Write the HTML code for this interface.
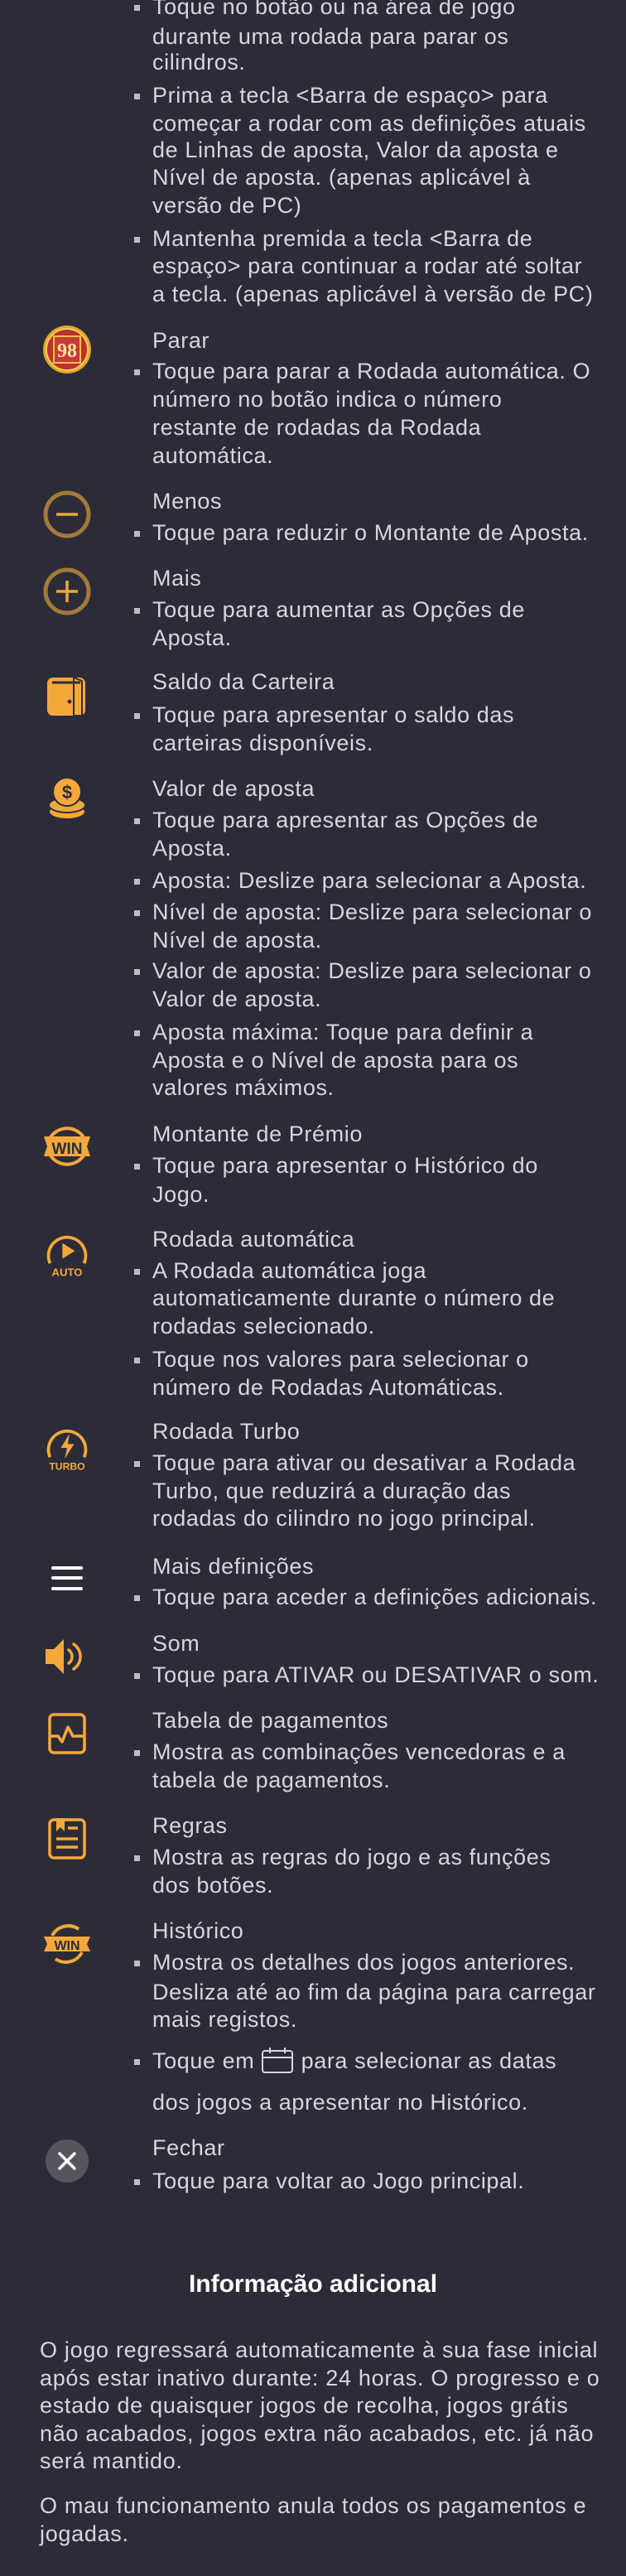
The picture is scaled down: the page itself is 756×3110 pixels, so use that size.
<!DOCTYPE html>
<html><head><meta charset="utf-8">
<style>
html,body{margin:0;padding:0;}
body{width:756px;height:3110px;background:#2c2c39;position:relative;overflow:hidden;font-family:"Liberation Sans","DejaVu Sans",sans-serif;color:#d6d6de;}
.l{position:absolute;left:184px;font-size:27px;letter-spacing:0.6px;line-height:34px;height:34px;white-space:nowrap;}
.b::before{content:"";position:absolute;left:-22px;top:15px;width:7px;height:7px;background:#bdbdc6;}
.ic{position:absolute;left:51px;width:60px;height:60px;}
.p{position:absolute;left:48px;font-size:27px;letter-spacing:0.7px;line-height:34px;white-space:nowrap;color:#d6d6de;}
</style></head><body>

<div class="l b" style="top:-9px">Toque no botão ou na área de jogo</div>
<div class="l" style="top:27px">durante uma rodada para parar os</div>
<div class="l" style="top:58px">cilindros.</div>
<div class="l b" style="top:98px">Prima a tecla &lt;Barra de espaço&gt; para</div>
<div class="l" style="top:132px">começar a rodar com as definições atuais</div>
<div class="l" style="top:164px">de Linhas de aposta, Valor da aposta e</div>
<div class="l" style="top:197px">Nível de aposta. (apenas aplicável à</div>
<div class="l" style="top:231px">versão de PC)</div>
<div class="l b" style="top:271px">Mantenha premida a tecla &lt;Barra de</div>
<div class="l" style="top:304px">espaço&gt; para continuar a rodar até soltar</div>
<div class="l" style="top:338px">a tecla. (apenas aplicável à versão de PC)</div>

<svg class="ic" style="top:392px" viewBox="0 0 60 60"><circle cx="30" cy="30" r="29" fill="#e0a92a"/><circle cx="30" cy="30" r="25" fill="#b8322e" stroke="#f6cf55" stroke-width="2"/><rect x="14" y="14" width="32" height="32" fill="#c9393a" stroke="#f2c14a" stroke-width="2"/><text x="30" y="39" text-anchor="middle" font-family="Liberation Serif,serif" font-weight="bold" font-size="24" fill="#fbe59a">98</text></svg>
<div class="l" style="top:394px">Parar</div>
<div class="l b" style="top:431px">Toque para parar a Rodada automática. O</div>
<div class="l" style="top:465px">número no botão indica o número</div>
<div class="l" style="top:499px">restante de rodadas da Rodada</div>
<div class="l" style="top:533px">automática.</div>

<svg class="ic" style="top:591px" viewBox="0 0 60 60"><circle cx="30" cy="30" r="26" fill="none" stroke="#a47a3a" stroke-width="5"/><line x1="17" y1="30" x2="43" y2="30" stroke="#f0a830" stroke-width="3.5"/></svg>
<div class="l" style="top:588px">Menos</div>
<div class="l b" style="top:626px">Toque para reduzir o Montante de Aposta.</div>

<svg class="ic" style="top:684px" viewBox="0 0 60 60"><circle cx="30" cy="30" r="26" fill="none" stroke="#a47a3a" stroke-width="5"/><line x1="17" y1="30" x2="43" y2="30" stroke="#f0a830" stroke-width="3.5"/><line x1="30" y1="17" x2="30" y2="43" stroke="#f0a830" stroke-width="3.5"/></svg>
<div class="l" style="top:681px">Mais</div>
<div class="l b" style="top:719px">Toque para aumentar as Opções de</div>
<div class="l" style="top:753px">Aposta.</div>

<svg class="ic" style="top:811px" viewBox="0 0 60 60"><rect x="6" y="7" width="46" height="46" rx="7" fill="#f5a83a"/><path d="M38 7 L48 11 L48 53 L38 53 Z" fill="#f5a83a" stroke="#2c2c39" stroke-width="2"/><path d="M12 13 H46" stroke="#2c2c39" stroke-width="3"/><circle cx="33" cy="36" r="2.5" fill="#2c2c39"/></svg>
<div class="l" style="top:806px">Saldo da Carteira</div>
<div class="l b" style="top:846px">Toque para apresentar o saldo das</div>
<div class="l" style="top:880px">carteiras disponíveis.</div>

<svg class="ic" style="top:936px" viewBox="0 0 60 60"><ellipse cx="30" cy="44" rx="22" ry="9" fill="#f5a83a" stroke="#2c2c39" stroke-width="2"/><ellipse cx="30" cy="36" rx="22" ry="9" fill="#f5a83a" stroke="#2c2c39" stroke-width="2"/><circle cx="30" cy="20" r="17" fill="#f5a83a" stroke="#2c2c39" stroke-width="2"/><text x="30" y="28" text-anchor="middle" font-weight="bold" font-size="22" fill="#2c2c39" font-family="Liberation Sans,sans-serif">$</text></svg>
<div class="l" style="top:935px">Valor de aposta</div>
<div class="l b" style="top:973px">Toque para apresentar as Opções de</div>
<div class="l" style="top:1007px">Aposta.</div>
<div class="l b" style="top:1046px">Aposta: Deslize para selecionar a Aposta.</div>
<div class="l b" style="top:1084px">Nível de aposta: Deslize para selecionar o</div>
<div class="l" style="top:1118px">Nível de aposta.</div>
<div class="l b" style="top:1155px">Valor de aposta: Deslize para selecionar o</div>
<div class="l" style="top:1189px">Valor de aposta.</div>
<div class="l b" style="top:1229px">Aposta máxima: Toque para definir a</div>
<div class="l" style="top:1263px">Aposta e o Nível de aposta para os</div>
<div class="l" style="top:1296px">valores máximos.</div>

<svg class="ic" style="top:1353px" viewBox="0 0 60 60"><path d="M10 20 A24 24 0 0 1 50 20" fill="none" stroke="#f5a83a" stroke-width="4"/><path d="M10 42 A24 24 0 0 0 50 42" fill="none" stroke="#f5a83a" stroke-width="4"/><path d="M2 19 H58 L54 31 L58 43 H2 L6 31 Z" fill="#f5a83a"/><text x="30" y="40" text-anchor="middle" font-weight="bold" font-size="19" fill="#2c2c39" font-family="Liberation Sans,sans-serif">WIN</text></svg>
<div class="l" style="top:1352px">Montante de Prémio</div>
<div class="l b" style="top:1390px">Toque para apresentar o Histórico do</div>
<div class="l" style="top:1425px">Jogo.</div>

<svg class="ic" style="top:1484px" viewBox="0 0 60 64"><path d="M8 44 A24 24 0 1 1 52 44" fill="none" stroke="#f5a83a" stroke-width="4"/><path d="M24 18 L40 28 L24 38 Z" fill="#f5a83a"/><text x="30" y="60" text-anchor="middle" font-weight="bold" font-size="14" fill="#f5a83a" font-family="Liberation Sans,sans-serif">AUTO</text></svg>
<div class="l" style="top:1479px">Rodada automática</div>
<div class="l b" style="top:1517px">A Rodada automática joga</div>
<div class="l" style="top:1550px">automaticamente durante o número de</div>
<div class="l" style="top:1584px">rodadas selecionado.</div>
<div class="l b" style="top:1624px">Toque nos valores para selecionar o</div>
<div class="l" style="top:1658px">número de Rodadas Automáticas.</div>

<svg class="ic" style="top:1718px" viewBox="0 0 60 64"><path d="M8 44 A24 24 0 1 1 52 44" fill="none" stroke="#f5a83a" stroke-width="4"/><path d="M33 14 L22 32 H30 L27 46 L39 27 H31 Z" fill="#f5a83a"/><text x="30" y="60" text-anchor="middle" font-weight="bold" font-size="13" fill="#f5a83a" font-family="Liberation Sans,sans-serif">TURBO</text></svg>
<div class="l" style="top:1711px">Rodada Turbo</div>
<div class="l b" style="top:1749px">Toque para ativar ou desativar a Rodada</div>
<div class="l" style="top:1783px">Turbo, que reduzirá a duração das</div>
<div class="l" style="top:1816px">rodadas do cilindro no jogo principal.</div>

<svg class="ic" style="top:1875px" viewBox="0 0 60 60"><g stroke="#fff" stroke-width="4" stroke-linecap="round"><line x1="13" y1="18" x2="47" y2="18"/><line x1="13" y1="30" x2="47" y2="30"/><line x1="13" y1="43" x2="47" y2="43"/></g></svg>
<div class="l" style="top:1874px">Mais definições</div>
<div class="l b" style="top:1911px">Toque para aceder a definições adicionais.</div>

<svg class="ic" style="top:1970px" viewBox="0 0 60 60"><path d="M4 21 H14 L26 9 V51 L14 39 H4 Z" fill="#f5a83a"/><path d="M32 22 A10 10 0 0 1 32 38" fill="none" stroke="#f5a83a" stroke-width="3.5" stroke-linecap="round"/><path d="M38 15 A18 18 0 0 1 38 45" fill="none" stroke="#f5a83a" stroke-width="3.5" stroke-linecap="round"/></svg>
<div class="l" style="top:1967px">Som</div>
<div class="l b" style="top:2005px">Toque para ATIVAR ou DESATIVAR o som.</div>

<svg class="ic" style="top:2063px" viewBox="0 0 60 60"><rect x="9" y="7" width="42" height="46" rx="5" fill="none" stroke="#f5a83a" stroke-width="3.5"/><path d="M9 33 H19 L24 40 L31 22 L37 33 H51" fill="none" stroke="#f5a83a" stroke-width="3.5" stroke-linejoin="round"/></svg>
<div class="l" style="top:2060px">Tabela de pagamentos</div>
<div class="l b" style="top:2098px">Mostra as combinações vencedoras e a</div>
<div class="l" style="top:2132px">tabela de pagamentos.</div>

<svg class="ic" style="top:2190px" viewBox="0 0 60 60"><rect x="9" y="7" width="42" height="46" rx="5" fill="none" stroke="#f5a83a" stroke-width="3.5"/><path d="M17 5 H27 V21 L22 16 L17 21 Z" fill="#f5a83a"/><g stroke="#f5a83a" stroke-width="3.5"><line x1="31" y1="17" x2="43" y2="17"/><line x1="17" y1="30" x2="43" y2="30"/><line x1="17" y1="40" x2="43" y2="40"/></g></svg>
<div class="l" style="top:2187px">Regras</div>
<div class="l b" style="top:2225px">Mostra as regras do jogo e as funções</div>
<div class="l" style="top:2259px">dos botões.</div>

<svg class="ic" style="top:2317px" viewBox="0 0 60 60"><path d="M12 20 A22 22 0 0 1 44 12" fill="none" stroke="#f5a83a" stroke-width="4"/><path d="M48 40 A22 22 0 0 1 16 48" fill="none" stroke="#f5a83a" stroke-width="4"/><path d="M2 21 H58 L54 30 L58 39 H2 L6 30 Z" fill="#f5a83a"/><text x="30" y="37" text-anchor="middle" font-weight="bold" font-size="16" fill="#2c2c39" font-family="Liberation Sans,sans-serif">WIN</text></svg>
<div class="l" style="top:2314px">Histórico</div>
<div class="l b" style="top:2352px">Mostra os detalhes dos jogos anteriores.</div>
<div class="l" style="top:2388px">Desliza até ao fim da página para carregar</div>
<div class="l" style="top:2421px">mais registos.</div>
<div class="l b" style="top:2471px">Toque em <svg width="40" height="34" viewBox="0 0 40 34" style="vertical-align:-8px"><rect x="2" y="5" width="36" height="26" rx="3" fill="none" stroke="#d6d6de" stroke-width="2"/><line x1="2" y1="13" x2="38" y2="13" stroke="#d6d6de" stroke-width="2"/><line x1="11" y1="1" x2="11" y2="8" stroke="#d6d6de" stroke-width="2"/><line x1="29" y1="1" x2="29" y2="8" stroke="#d6d6de" stroke-width="2"/></svg> para selecionar as datas</div>
<div class="l" style="top:2521px">dos jogos a apresentar no Histórico.</div>

<svg class="ic" style="top:2579px" viewBox="0 0 60 60"><circle cx="30" cy="30" r="26" fill="#55555f"/><g stroke="#fff" stroke-width="3.5" stroke-linecap="round"><line x1="21" y1="21" x2="39" y2="39"/><line x1="39" y1="21" x2="21" y2="39"/></g></svg>
<div class="l" style="top:2576px">Fechar</div>
<div class="l b" style="top:2616px">Toque para voltar ao Jogo principal.</div>

<div style="position:absolute;left:0;top:2691px;width:756px;height:2px;background:#292935"></div>
<div style="position:absolute;left:0;top:2738px;width:756px;text-align:center;font-size:30px;font-weight:bold;color:#fff;line-height:40px">Informação adicional</div>

<div class="p" style="top:2820px">O jogo regressará automaticamente à sua fase inicial</div>
<div class="p" style="top:2854px">após estar inativo durante: 24 horas. O progresso e o</div>
<div class="p" style="top:2887px">estado de quaisquer jogos de recolha, jogos grátis</div>
<div class="p" style="top:2921px">não acabados, jogos extra não acabados, etc. já não</div>
<div class="p" style="top:2954px">será mantido.</div>
<div class="p" style="top:3008px">O mau funcionamento anula todos os pagamentos e</div>
<div class="p" style="top:3042px">jogadas.</div>
</body></html>
